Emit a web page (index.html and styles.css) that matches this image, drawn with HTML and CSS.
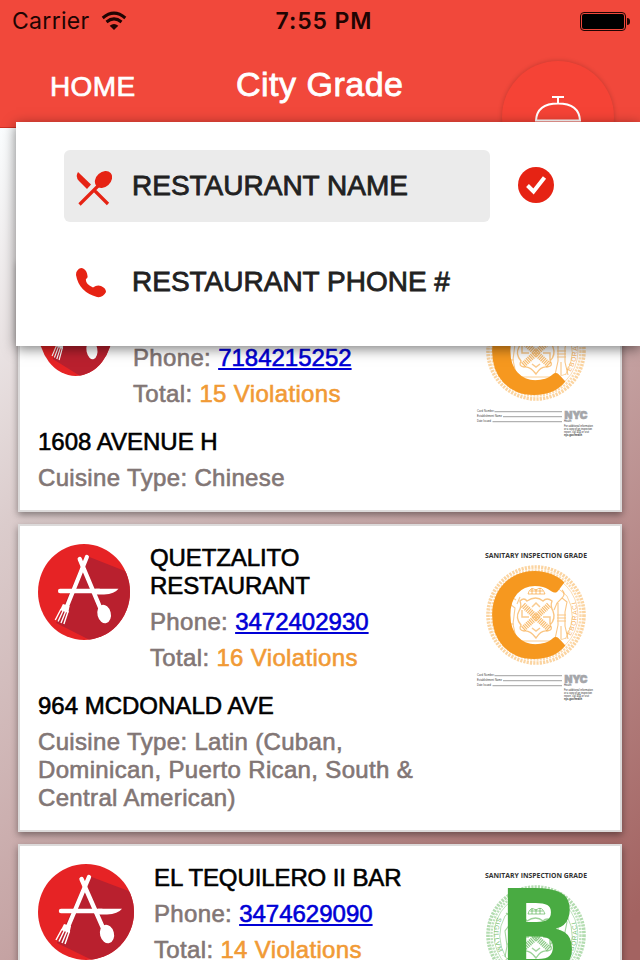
FILE: index.html
```html
<!DOCTYPE html>
<html lang="en">
<head>
    <meta charset="UTF-8">
    <meta name="viewport" content="width=device-width, initial-scale=1.0">
    <title>City Grade</title>
    <link rel="stylesheet" href="styles.css">
</head>
<body>
    <!-- shared artwork -->
    <svg class="sprite">
        <symbol id="logo" viewBox="0 0 96 96" preserveAspectRatio="none">
            <rect width="96" height="96" fill="#e62325"/>
            <path d="M51 12L96 29V96H54L19 79L46 20Z" fill="#b9202e"/>
            <g fill="none" stroke="#fff" stroke-linecap="round">
                <path d="M51 13L29.500 64" stroke-width="4.400"/>
                <path d="M43.500 15L65 64" stroke-width="4.400"/>
                <path d="M23 47H64" stroke-width="4.400"/>
                <path d="M24 65L18 76M26.500 66L21 77.500M29 67L24 79M31.500 67L27 80" stroke-width="1.500" stroke-linecap="butt"/>
            </g>
            <path d="M26 60L33 62L31.500 69L23 66Z" fill="#fff"/>
            <ellipse cx="69" cy="70" rx="7" ry="9.300" transform="rotate(-15 69 70)" fill="#fff"/>
            <path d="M60 44.800H84Q80 50 69 50.500H60Z" fill="#fff"/>
        </symbol>

        <symbol id="seal" viewBox="0 0 132 170">
            <g fill="none" stroke="currentColor">
                <circle cx="66" cy="71" r="48" stroke-width="3.600" stroke-dasharray="2.200 1.100" opacity=".42"/>
                <circle cx="66" cy="71" r="44.500" stroke-width="2.400" stroke-dasharray="2 1.200" opacity=".36"/>
                <circle cx="66" cy="71" r="42" stroke-width=".7" opacity=".5"/>
                <path d="M35 52Q66 22 97 52M35 52Q24 72 36 94M97 52Q108 72 96 94M36 94Q66 108 96 94" stroke-width=".8" opacity=".5"/>
                <path d="M50 57Q54 53 57 57Q66 51 73 57Q77 53 82 57Q80 62 83 67Q86 75 80 81Q84 86 77 87Q71 86 66 94Q60 86 54 87Q48 86 51 81Q45 74 49 67Q52 62 50 57Z" stroke-width="1.400" opacity=".55"/>
                <path d="M53 61L79 85M79 61L53 85" stroke-width="6" stroke-dasharray="1.200 .8" opacity=".65"/>
                <path d="M59 73H52V66M73 73H80V80M62 63L66 59L70 63M62 84L66 87L70 84" stroke-width="1.500" opacity=".5"/>
                <path d="M58 50Q60 42 66 46Q72 41 75 50ZM60 47H73M62 44V50M66 45V50M70 44V50" stroke-width="1" opacity=".6"/>
                <path d="M92 46Q96 50 92 54L97 58L95 68V82L98 95M92 54L87 59L84 66M88 59V81L85 95M91 82V95M87 74H96M87 77H96M87 71H96" stroke-width="1.100" opacity=".55"/>
                <path d="M41 53Q37 56 40 60L45 64L43 80L46 94M40 60L35 67L37 82L35 93M37 80H44M46 56L36 49M47 60L50 53" stroke-width="1.100" opacity=".5"/>
                <path d="M45 97H87M46 100Q66 104 86 100" stroke-width=".8" opacity=".6"/>
            </g>
            <path id="ring" d="M27.500 53A41.500 41.500 0 1 0 105 56" fill="none"/>
            <text class="motto" fill="currentColor"><textPath href="#ring" textLength="158">SIGILLVM · CIVITATIS · NOVI · EBORACI</textPath></text>
        </symbol>

        <symbol id="slip" viewBox="0 0 132 170">
            <g class="fine">
                <text x="7" y="131.800" textLength="17">Card Number</text>
                <text x="7" y="136.800" textLength="25">Establishment Name</text>
                <text x="7" y="141.800" textLength="14">Date Issued</text>
                <text x="94" y="142">Health</text>
                <text x="94" y="147.300" textLength="29">For additional information</text>
                <text x="94" y="150.300" textLength="28">or a copy of an inspection</text>
                <text x="94" y="153.300" textLength="25">report, call <tspan font-weight="bold">311</tspan> or visit</text>
                <text x="94" y="156.300" textLength="18" font-weight="bold">nyc.gov/health</text>
            </g>
            <path d="M24.500 131.700H92M33 136.700H92M22.500 141.700H92" stroke="#777" stroke-width=".7"/>
            <text class="nyc" x="94.500" y="138.500" textLength="23" lengthAdjust="spacingAndGlyphs">NYC</text>
        </symbol>
    </svg>

    <div class="screen">
        <header class="header">
            <div class="status-bar">
                <div class="carrier">
                    <span>Carrier</span>
                    <svg class="wifi" viewBox="0 0 26 20">
                        <path d="M13 19L8.700 14.700Q13 11.500 17.300 14.700Z"/>
                        <path d="M5.500 11Q13 4.800 20.500 11M1.700 7Q13-2.700 24.300 7" fill="none" stroke="#200402" stroke-width="3"/>
                    </svg>
                </div>
                <div class="clock">7:55 PM</div>
                <div class="battery"><span class="charge"></span></div>
            </div>
            <div class="nav-bar">
                <a class="home">HOME</a>
                <h1 class="title">City Grade</h1>
                <div class="bell">
                    <svg width="48" height="28" viewBox="0 0 48 28" fill="none" stroke="#fff" stroke-width="2">
                        <path d="M18 2H30M24 2V8M2 25.500Q3 8.500 24 8.500Q45 8.500 46 25.500Z"/>
                    </svg>
                </div>
            </div>
        </header>

        <div class="popup">
            <div class="option-row">
                <div class="option active">
                    <svg class="icon" viewBox="0 0 36 36">
                        <path d="M2 1L15 13.500L11 18L3 10Q-1 6 2 1Z"/>
                        <path d="M3.500 33.500L24 13M18.500 19.500L32 33" fill="none" stroke="#e62314" stroke-width="3.200"/>
                        <ellipse cx="27.500" cy="8.500" rx="7.300" ry="9.600" transform="rotate(48 27.500 8.500)"/>
                    </svg>
                    <span>RESTAURANT NAME</span>
                </div>
                <svg class="check" viewBox="0 0 36 36">
                    <circle cx="18" cy="18" r="18"/>
                    <path d="M9.500 18.500L15.500 24.500L26.500 10.500" fill="none" stroke="#fff" stroke-width="4"/>
                </svg>
            </div>
            <div class="option-row">
                <div class="option">
                    <svg class="icon" viewBox="0 0 36 36">
                        <path d="M1 4Q4-1 8 2Q11 4 11.500 9Q12 11 10 12Q9 17 17 20.500Q21 17.500 25 19Q30 21 30 25Q27 31 21 30Q3 25 0 8Q0 5 1 4Z"/>
                    </svg>
                    <span>RESTAURANT PHONE #</span>
                </div>
            </div>
        </div>

        <main class="list">
            <section class="card">
                <div class="details">
                    <div class="summary">
                        <svg class="logo narrow"><use href="#logo"/></svg>
                        <div class="info two-line">
                            <p>Phone: <a class="phone" href="tel:7184215252">7184215252</a></p>
                            <p>Total: <span class="violations">15 Violations</span></p>
                        </div>
                    </div>
                    <h3 class="address">1608 AVENUE H</h3>
                    <p>Cuisine Type: Chinese</p>
                </div>
                <svg class="grade grade-c" viewBox="0 0 132 170">
                    <use href="#seal"/>
                    <text class="letter" x="18" y="113.500">C</text>
                    <use href="#slip"/>
                </svg>
            </section>

            <section class="card">
                <div class="details">
                    <div class="summary">
                        <svg class="logo medium"><use href="#logo"/></svg>
                        <div class="info">
                            <h3>QUETZALITO<br>RESTAURANT</h3>
                            <p>Phone: <a class="phone" href="tel:3472402930">3472402930</a></p>
                            <p>Total: <span class="violations">16 Violations</span></p>
                        </div>
                    </div>
                    <h3 class="address">964 MCDONALD AVE</h3>
                    <p>Cuisine Type: Latin (Cuban, Dominican, Puerto Rican, South &amp; Central American)</p>
                </div>
                <svg class="grade grade-c" viewBox="0 0 132 170">
                    <text class="heading" x="15" y="14" textLength="102" lengthAdjust="spacingAndGlyphs">SANITARY INSPECTION GRADE</text>
                    <use href="#seal"/>
                    <text class="letter" x="18" y="113.500">C</text>
                    <use href="#slip"/>
                </svg>
            </section>

            <section class="card">
                <div class="details">
                    <div class="summary">
                        <svg class="logo"><use href="#logo"/></svg>
                        <div class="info">
                            <h3>EL TEQUILERO II BAR</h3>
                            <p>Phone: <a class="phone" href="tel:3474629090">3474629090</a></p>
                            <p>Total: <span class="violations">14 Violations</span></p>
                        </div>
                    </div>
                </div>
                <svg class="grade grade-b" viewBox="0 0 132 170">
                    <text class="heading" x="15" y="14" textLength="102" lengthAdjust="spacingAndGlyphs">SANITARY INSPECTION GRADE</text>
                    <use href="#seal"/>
                    <text class="letter" x="27" y="110">B</text>
                </svg>
            </section>
        </main>
    </div>
</body>
</html>
```
FILE: styles.css
```css
* {
    box-sizing: border-box;
}
body {
    margin: 0;
    font-family: "Liberation Sans", Arial, sans-serif;
    font-size: 24px;
    line-height: 28px;
    overflow: hidden;
}
h1, h3, p {
    margin: 0;
    font-size: inherit;
    font-weight: normal;
}
.sprite {
    display: none;
}
.screen {
    position: relative;
    width: 640px;
    height: 960px;
    overflow: hidden;
    background: linear-gradient(135deg, #fbfeff 8%, #dbcccc 33%, #c5a3a3 60%, #a36361 97%);
}

/* Header */
.header {
    height: 128px;
    background: #f1483b;
    border-bottom: 1px solid #cf2f22;
}
.status-bar {
    display: grid;
    grid-template-columns: 1fr auto 1fr;
    align-items: center;
    height: 40px;
    padding: 2px 11px 0 12px;
    font-family: Inter, sans-serif;
    font-size: 23px;
    color: #200402;
}
.carrier {
    display: flex;
    align-items: center;
    gap: 11px;
    letter-spacing: 0.3px;
}
.wifi {
    width: 26px;
    height: 20px;
    fill: #200402;
}
.clock {
    padding-left: 7px;
    font-weight: 600;
    letter-spacing: 0.9px;
}
.battery {
    display: flex;
    justify-self: end;
    width: 46px;
    height: 19px;
    margin-right: 3px;
    padding: 1px;
    border: 1px solid #200402;
    border-radius: 4px;
    position: relative;
}
.battery::after {
    content: "";
    position: absolute;
    left: 46px;
    top: 5px;
    width: 3px;
    height: 7px;
    border-radius: 0 3px 3px 0;
    background: #200402;
}
.charge {
    flex: 1;
    border-radius: 2px;
    background: #000;
}
.nav-bar {
    display: grid;
    grid-template-columns: 186px 268px 1fr;
    align-items: start;
    height: 87px;
    padding-left: 50px;
    color: #fff;
}
.home {
    padding-top: 33px;
    font-size: 28px;
    letter-spacing: 0.4px;
    -webkit-text-stroke: 0.7px #fff;
}
.title {
    padding-top: 30px;
    font-size: 34px;
    letter-spacing: 0.5px;
    -webkit-text-stroke: 0.8px #fff;
}
.bell {
    display: flex;
    justify-content: center;
    width: 112px;
    height: 112px;
    margin: 21px 0 0 -2px;
    padding-top: 34px;
    border-radius: 50%;
    background: #f54336;
    box-shadow: 0 0 5px rgba(0, 0, 0, 0.2);
}

/* Search type menu */
.popup {
    position: absolute;
    left: 16px;
    top: 122px;
    z-index: 2;
    width: 624px;
    height: 224px;
    padding: 28px 48px;
    background: #fff;
    box-shadow: 0 3px 12px rgba(0, 0, 0, 0.5);
}
.option-row {
    display: flex;
    align-items: center;
    gap: 28px;
    margin-bottom: 24px;
}
.option {
    display: flex;
    align-items: center;
    gap: 20px;
    width: 426px;
    height: 72px;
    padding-left: 12px;
    border-radius: 6px;
    font-size: 28px;
    color: #212121;
    -webkit-text-stroke: 0.8px #212121;
}
.option.active {
    background: #ebebeb;
}
.icon {
    width: 36px;
    height: 36px;
    margin-top: 6px;
    fill: #e62314;
}
.check {
    width: 36px;
    height: 36px;
    margin-bottom: 2px;
    fill: #e62314;
}

/* Restaurant cards */
.list {
    display: flex;
    flex-direction: column;
    gap: 12px;
    padding: 132px 18px 0;
}
.card {
    display: flex;
    justify-content: space-between;
    padding: 18px;
    border: 2px solid #dcdada;
    background: #fff;
    box-shadow: 0 3px 7px rgba(0, 0, 0, 0.4);
}
.details {
    width: 400px;
    color: #827675;
    letter-spacing: 0.34px;
    -webkit-text-stroke: 0.6px;
}
.summary {
    display: flex;
    align-items: flex-start;
    gap: 20px;
}
.logo {
    flex: none;
    width: 96px;
    height: 96px;
    border-radius: 50%;
}
.logo.medium {
    width: 92px;
}
.logo.narrow {
    width: 75px;
}
.info p {
    margin-top: 8px;
    white-space: nowrap;
}
.info.two-line {
    padding-top: 56px;
}
h3 {
    color: #000;
    letter-spacing: -0.1px;
}
.address {
    margin: 20px 0 8px;
    letter-spacing: 0;
}
.phone {
    color: #0000d6;
    letter-spacing: 0;
    text-underline-offset: 2px;
    text-decoration-thickness: 1.5px;
}
.violations {
    color: #f19a35;
}

/* Inspection grade notice */
.grade {
    flex: none;
    width: 132px;
    height: 170px;
}
.grade-c {
    color: #f6981f;
    margin-bottom: -20px;
}
.grade-b {
    color: #49ab42;
}
.heading {
    font: 700 7.2px "Open Sans", sans-serif;
    fill: #333;
}
.letter {
    font: 700 121px "Open Sans", sans-serif;
    fill: currentColor;
}
.grade-c .letter {
    font: 900 119px Lato, sans-serif;
}
.motto {
    font: 6.5px "Liberation Sans", sans-serif;
    opacity: 0.75;
}
.fine {
    font: 2.6px "Liberation Sans", sans-serif;
    fill: #333;
}
.nyc {
    font: 900 11px Inter, sans-serif;
    fill: #a5a6aa;
    stroke: #a5a6aa;
    stroke-width: 0.7px;
}
```
